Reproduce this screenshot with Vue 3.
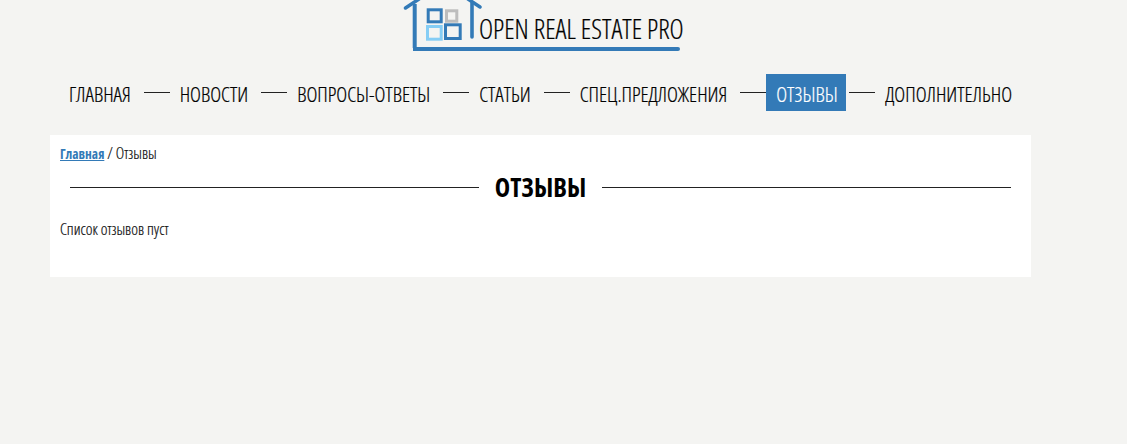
<template>
  <div class="page">
    <header class="logo-row">
      <a class="logo">
        <svg class="logo-mark" width="80" height="52" viewBox="0 0 80 52" fill="none">
          <path d="M3.5 8 L17 -1 M66 -1 L78 7" stroke="#337ab7" stroke-width="3.5" stroke-linecap="round" />
          <path d="M12.7 4 V48" stroke="#337ab7" stroke-width="4" />
          <path d="M70 3 V37" stroke="#337ab7" stroke-width="3.6" stroke-linecap="round" />
          <rect x="26.2" y="9.8" width="13" height="12" stroke="#337ab7" stroke-width="3" />
          <rect x="44.5" y="10.8" width="10.3" height="10.4" stroke="#bdbdbd" stroke-width="3" />
          <rect x="25.5" y="26.5" width="13.7" height="12.7" stroke="#85cdf5" stroke-width="3" />
          <rect x="43.5" y="24.8" width="14.7" height="13.7" stroke="#337ab7" stroke-width="3" />
        </svg>
        <span class="logo-text">OPEN REAL ESTATE PRO</span>
      </a>
    </header>
    <nav class="menu">
      <template v-for="(item, i) in items" :key="item">
        <span v-if="i" class="sep"></span>
        <a class="item" :class="{ active: item === 'ОТЗЫВЫ' }">{{ item }}</a>
      </template>
    </nav>
    <main class="card">
      <div class="crumbs"><a>Главная</a> / Отзывы</div>
      <div class="heading">
        <span class="rule"></span>
        <h1>ОТЗЫВЫ</h1>
        <span class="rule"></span>
      </div>
      <p class="empty">Список отзывов пуст</p>
    </main>
  </div>
</template>

<script setup>
const items = ['ГЛАВНАЯ', 'НОВОСТИ', 'ВОПРОСЫ-ОТВЕТЫ', 'СТАТЬИ', 'СПЕЦ.ПРЕДЛОЖЕНИЯ', 'ОТЗЫВЫ', 'ДОПОЛНИТЕЛЬНО']
</script>

<style>
html, body { margin: 0; background: #f4f4f2; }
</style>

<style scoped>
.page {
  height: 444px;
  overflow: hidden;
  background: #f4f4f2;
  color: #000;
  font-family: "Open Sans", "Noto Sans", sans-serif;
  font-stretch: 75%;
  font-weight: 300;
  -webkit-text-stroke: 0.2px currentColor;
}
.logo-row { display: flex; padding-left: 402px; height: 74px; }
.logo { display: flex; position: relative; width: 278px; height: 52px; }
.logo-mark { display: block; position: absolute; left: 0; top: 0; }
.logo-text {
  position: absolute; left: 77px; top: 14px;
  font-size: 26.8px; line-height: 30px; white-space: nowrap; color: #000;
}
.logo::after {
  content: ""; position: absolute; left: 11px; right: 0; top: 46.5px; height: 4px; background: #337ab7; border-radius: 0 2px 2px 0;
}
.menu { display: flex; align-items: center; padding-left: 59px; height: 37px; }
.item {
  padding: 3px 10px 0; line-height: 34px; font-size: 20.7px; white-space: nowrap; color: #000;
}
.item.active { padding: 3px 9px 0 10px; width: 61px; background: #337ab7; color: #fff; overflow: hidden; }
.sep { width: 26px; height: 1px; background: #222; margin-left: 3px; }
.card {
  margin: 24px 0 0 50px; width: 981px; height: 142px; box-sizing: border-box;
  background: #fff; padding: 9px 10px 10px;
}
.crumbs { height: 18px; font-size: 16px; line-height: 18px; color: #111; }
.crumbs a { color: #337ab7; font-size: 13.5px; font-weight: 700; text-decoration: underline; -webkit-text-stroke: 0; }
.heading { display: flex; align-items: center; gap: 16px; margin: 7px 10px 0; height: 36px; }
.rule { flex: 1; height: 1px; background: #222; }
h1 { margin: 0; font-size: 26px; font-weight: 700; line-height: 36px; -webkit-text-stroke: 0; }
.empty { margin: 15px 0 0; font-size: 16px; line-height: 18px; color: #111; }
</style>
